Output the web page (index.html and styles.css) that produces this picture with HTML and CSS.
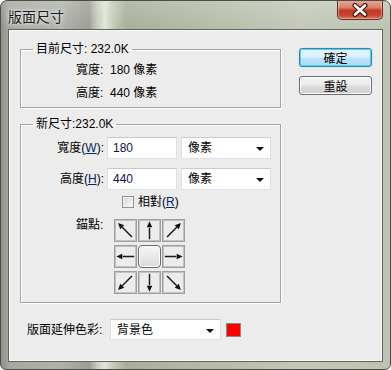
FILE: index.html
```html
<!DOCTYPE html>
<html lang="zh-Hant">
<head>
<meta charset="utf-8">
<title>版面尺寸</title>
<link rel="stylesheet" href="styles.css">
</head>
<body>
<div class="window">
  <div class="titlebar">
    <span class="title">版面尺寸</span>
    <button class="close" type="button" aria-label="關閉">
      <svg width="24" height="14" viewBox="0 0 24 14">
        <path d="M7 2.5 L17 11.5 M17 2.5 L7 11.5" stroke="#3b1c14" stroke-width="5" stroke-linecap="round"/>
        <path d="M7 2.5 L17 11.5 M17 2.5 L7 11.5" stroke="#ffffff" stroke-width="2.6" stroke-linecap="round"/>
      </svg>
    </button>
  </div>
  <div class="client">
    <div class="main">
      <div class="left">
        <fieldset class="group current">
          <legend>目前尺寸: 232.0K</legend>
          <div class="info">
            <div class="info-row">寬度:&nbsp; 180 像素</div>
            <div class="info-row">高度:&nbsp; 440 像素</div>
          </div>
        </fieldset>
        <fieldset class="group resize">
          <legend>新尺寸:232.0K</legend>
          <div class="field-row first">
            <label class="field-label">寬度(<u>W</u>):</label>
            <div class="textbox">180</div>
            <div class="combo">像素<span class="caret"></span></div>
          </div>
          <div class="field-row">
            <label class="field-label">高度(<u>H</u>):</label>
            <div class="textbox">440</div>
            <div class="combo">像素<span class="caret"></span></div>
          </div>
          <div class="check-row">
            <span class="checkbox"></span>
            <span>相對(<u>R</u>)</span>
          </div>
          <div class="anchor-row">
            <span class="anchor-label">錨點:</span>
            <div class="anchor-grid">
              <div class="cell"><svg viewBox="-11.5 -11.5 23 23"><g transform="rotate(-45)"><line x1="0" y1="10" x2="0" y2="-5" /><polygon points="-3.2,-5 3.2,-5 0,-11.5"/></g></svg></div>
              <div class="cell"><svg viewBox="-11.5 -11.5 23 23"><g><line x1="0" y1="9.5" x2="0" y2="-3" /><polygon points="-3,-3.5 3,-3.5 0,-10"/></g></svg></div>
              <div class="cell"><svg viewBox="-11.5 -11.5 23 23"><g transform="rotate(45)"><line x1="0" y1="10" x2="0" y2="-5" /><polygon points="-3.2,-5 3.2,-5 0,-11.5"/></g></svg></div>
              <div class="cell"><svg viewBox="-11.5 -11.5 23 23"><g transform="rotate(-90)"><line x1="0" y1="9.5" x2="0" y2="-3" /><polygon points="-3,-3.5 3,-3.5 0,-10"/></g></svg></div>
              <div class="cell center"></div>
              <div class="cell"><svg viewBox="-11.5 -11.5 23 23"><g transform="rotate(90)"><line x1="0" y1="9.5" x2="0" y2="-3" /><polygon points="-3,-3.5 3,-3.5 0,-10"/></g></svg></div>
              <div class="cell"><svg viewBox="-11.5 -11.5 23 23"><g transform="rotate(-135)"><line x1="0" y1="10" x2="0" y2="-5" /><polygon points="-3.2,-5 3.2,-5 0,-11.5"/></g></svg></div>
              <div class="cell"><svg viewBox="-11.5 -11.5 23 23"><g transform="rotate(180)"><line x1="0" y1="9.5" x2="0" y2="-3" /><polygon points="-3,-3.5 3,-3.5 0,-10"/></g></svg></div>
              <div class="cell"><svg viewBox="-11.5 -11.5 23 23"><g transform="rotate(135)"><line x1="0" y1="10" x2="0" y2="-5" /><polygon points="-3.2,-5 3.2,-5 0,-11.5"/></g></svg></div>
            </div>
          </div>
        </fieldset>
      </div>
      <div class="buttons">
        <button class="btn default" type="button">確定</button>
        <button class="btn" type="button">重設</button>
      </div>
    </div>
    <div class="bottom-row">
      <span class="bottom-label">版面延伸色彩:</span>
      <div class="combo wide">背景色<span class="caret"></span></div>
      <span class="swatch"></span>
    </div>
  </div>
</div>
</body>
</html>
```

FILE: styles.css
```css
* { box-sizing: border-box; }

html, body {
  margin: 0;
  padding: 0;
  background: #ffffff;
}

body {
  font-family: "Liberation Sans", "Noto Sans CJK TC", sans-serif;
  font-size: 12px;
  line-height: 14px;
  color: #000;
}

.window {
  width: 391px;
  height: 370px;
  display: flex;
  flex-direction: column;
  border: 1px solid #4b4e48;
  border-radius: 7px 7px 6px 6px;
  background:
    linear-gradient(180deg, rgba(255,255,255,0.18) 0px, rgba(255,255,255,0) 28px),
    linear-gradient(90deg, #8e918a 0px, #a5a7a0 8px, #b0b2ab 60px, #9a9d95 88px, #c6cbbf 96px, #dfe5d8 104px, #c3cbb7 112px, #a7af9b 125px, #aeb5a2 170px, #b9c0ad 240px, #c3c8b9 300px, #bcc4b1 391px);
  overflow: hidden;
}

.titlebar {
  height: 28px;
  display: flex;
  align-items: flex-start;
  justify-content: space-between;
  padding-left: 7px;
}

.title {
  margin-top: 7px;
  font-family: "Noto Sans CJK TC", sans-serif;
  font-size: 14px;
  line-height: 16px;
  color: #1b1b22;
  text-shadow: 0 0 6px rgba(255,255,255,0.9), 0 0 3px rgba(255,255,255,0.8);
}

.close {
  width: 46px;
  height: 20px;
  margin: -1px 7px 0 0;
  padding: 0;
  display: flex;
  align-items: center;
  justify-content: center;
  border: 1px solid #5b3128;
  border-top: none;
  border-radius: 0 0 5px 5px;
  background: linear-gradient(180deg, #e9a998 0%, #d9806b 40%, #c2381f 55%, #c9462d 80%, #dc7356 100%);
  box-shadow: inset 0 0 0 1px rgba(255,220,210,0.45);
}

.client {
  flex: 1;
  margin: 0 7px 7px 7px;
  background: #ececec;
  border: 1px solid #62665d;
  box-shadow: inset 0 0 0 1px #f8f8f8;
  display: flex;
  flex-direction: column;
}

.main {
  display: flex;
  align-items: flex-start;
}

.left {
  margin-left: 11px;
  width: 261px;
  display: flex;
  flex-direction: column;
}

.group {
  margin: 0;
  padding: 0;
  min-width: 0;
  border: 1px solid #a3a3a3;
  box-shadow: 1px 1px 0 #ffffff, inset 1px 1px 0 #ffffff;
}

.group legend {
  margin-left: 12px;
  padding: 0 3px;
  line-height: 14px;
  font-family: "Liberation Sans", "Noto Sans CJK TC", sans-serif;
}

.current {
  margin-top: 12px;
  padding: 7px 0 7px 0;
}

.info {
  padding-left: 55px;
}

.info-row + .info-row {
  margin-top: 9px;
}

.resize {
  margin-top: 9px;
  padding: 6px 0 8px 0;
}

.field-row {
  display: flex;
  align-items: center;
  height: 22px;
}

.field-row + .field-row {
  margin-top: 9px;
}

.field-label {
  width: 84px;
  text-align: right;
  padding-right: 1px;
  margin-right: 2px;
}

.field-label u, .check-row u {
  color: #0a246a;
  text-decoration-color: #0a246a;
}

.textbox {
  width: 70px;
  height: 22px;
  padding: 3px 5px;
  background: #fff;
  border: 1px solid #dcdfe5;
  border-top-color: #c4c7cd;
  color: #11114a;
}

.combo {
  position: relative;
  width: 90px;
  height: 22px;
  margin-left: 4px;
  padding: 3px 6px;
  background: #fff;
  border: 1px solid #dcdfe5;
  border-top-color: #c8cbd1;
}

.caret {
  position: absolute;
  right: 6px;
  top: 9px;
  width: 0;
  height: 0;
  border-left: 4px solid transparent;
  border-right: 4px solid transparent;
  border-top: 4px solid #111;
}

.check-row {
  display: flex;
  align-items: center;
  gap: 4px;
  margin-top: 5px;
  padding-left: 101px;
  height: 14px;
}

.checkbox {
  width: 12px;
  height: 12px;
  border: 1px solid #8f8f8f;
  background: linear-gradient(135deg, #d9d9d9, #f7f7f7);
  box-shadow: inset 0 0 0 1px #f2f2f2;
}

.anchor-row {
  display: flex;
  align-items: flex-start;
  margin-top: 10px;
  padding-left: 55px;
}

.anchor-label {
  width: 38px;
  margin-top: -1px;
}

.anchor-grid {
  display: grid;
  grid-template-columns: repeat(3, 23px);
  grid-template-rows: repeat(3, 23px);
  column-gap: 1px;
  row-gap: 3px;
}

.cell {
  width: 23px;
  height: 23px;
  border: 1px solid #9e9e9e;
  box-shadow: inset 0 0 0 1px #c2c2c2;
  display: flex;
  align-items: center;
  justify-content: center;
}

.cell svg {
  width: 21px;
  height: 21px;
  overflow: visible;
}

.cell line {
  stroke: #1a1a1a;
  stroke-width: 1.6;
}

.cell polygon {
  fill: #111;
}

.cell.center {
  border: 1px solid #6c6c6c;
  border-radius: 4px;
  background: linear-gradient(180deg, #f6f6f6 0%, #e9e9e9 50%, #dadada 100%);
  box-shadow: inset 0 0 0 1px #fafafa;
}

.buttons {
  margin-left: 18px;
  margin-top: 18px;
  display: flex;
  flex-direction: column;
  gap: 9px;
}

.btn {
  width: 73px;
  height: 19px;
  padding: 0;
  font-family: "Noto Sans CJK TC", sans-serif;
  font-size: 12px;
  line-height: 14px;
  color: #000;
  border: 1px solid #707070;
  border-radius: 3px;
  background: linear-gradient(180deg, #f3f3f3 0%, #ebebeb 48%, #dddddd 52%, #cfcfcf 100%);
  box-shadow: inset 0 0 0 1px #fbfbfb;
}

.btn.default {
  border-color: #3c7fb1;
  background: linear-gradient(180deg, #eaf6fd 0%, #d9f0fc 48%, #bee6fd 52%, #a7d9f5 100%);
  box-shadow: inset 0 0 0 1px #48d2f6, 0 0 1px #6bb7df;
}

.bottom-row {
  display: flex;
  align-items: center;
  margin-top: 16px;
  padding-left: 18px;
}

.bottom-label {
  width: 83px;
}

.combo.wide {
  width: 111px;
  height: 21px;
  margin-left: 0;
  padding: 3px 6px;
}

.swatch {
  width: 15px;
  height: 14px;
  margin-left: 5px;
  background: #ff0000;
  border: 1px solid #8a8a8a;
}
```
